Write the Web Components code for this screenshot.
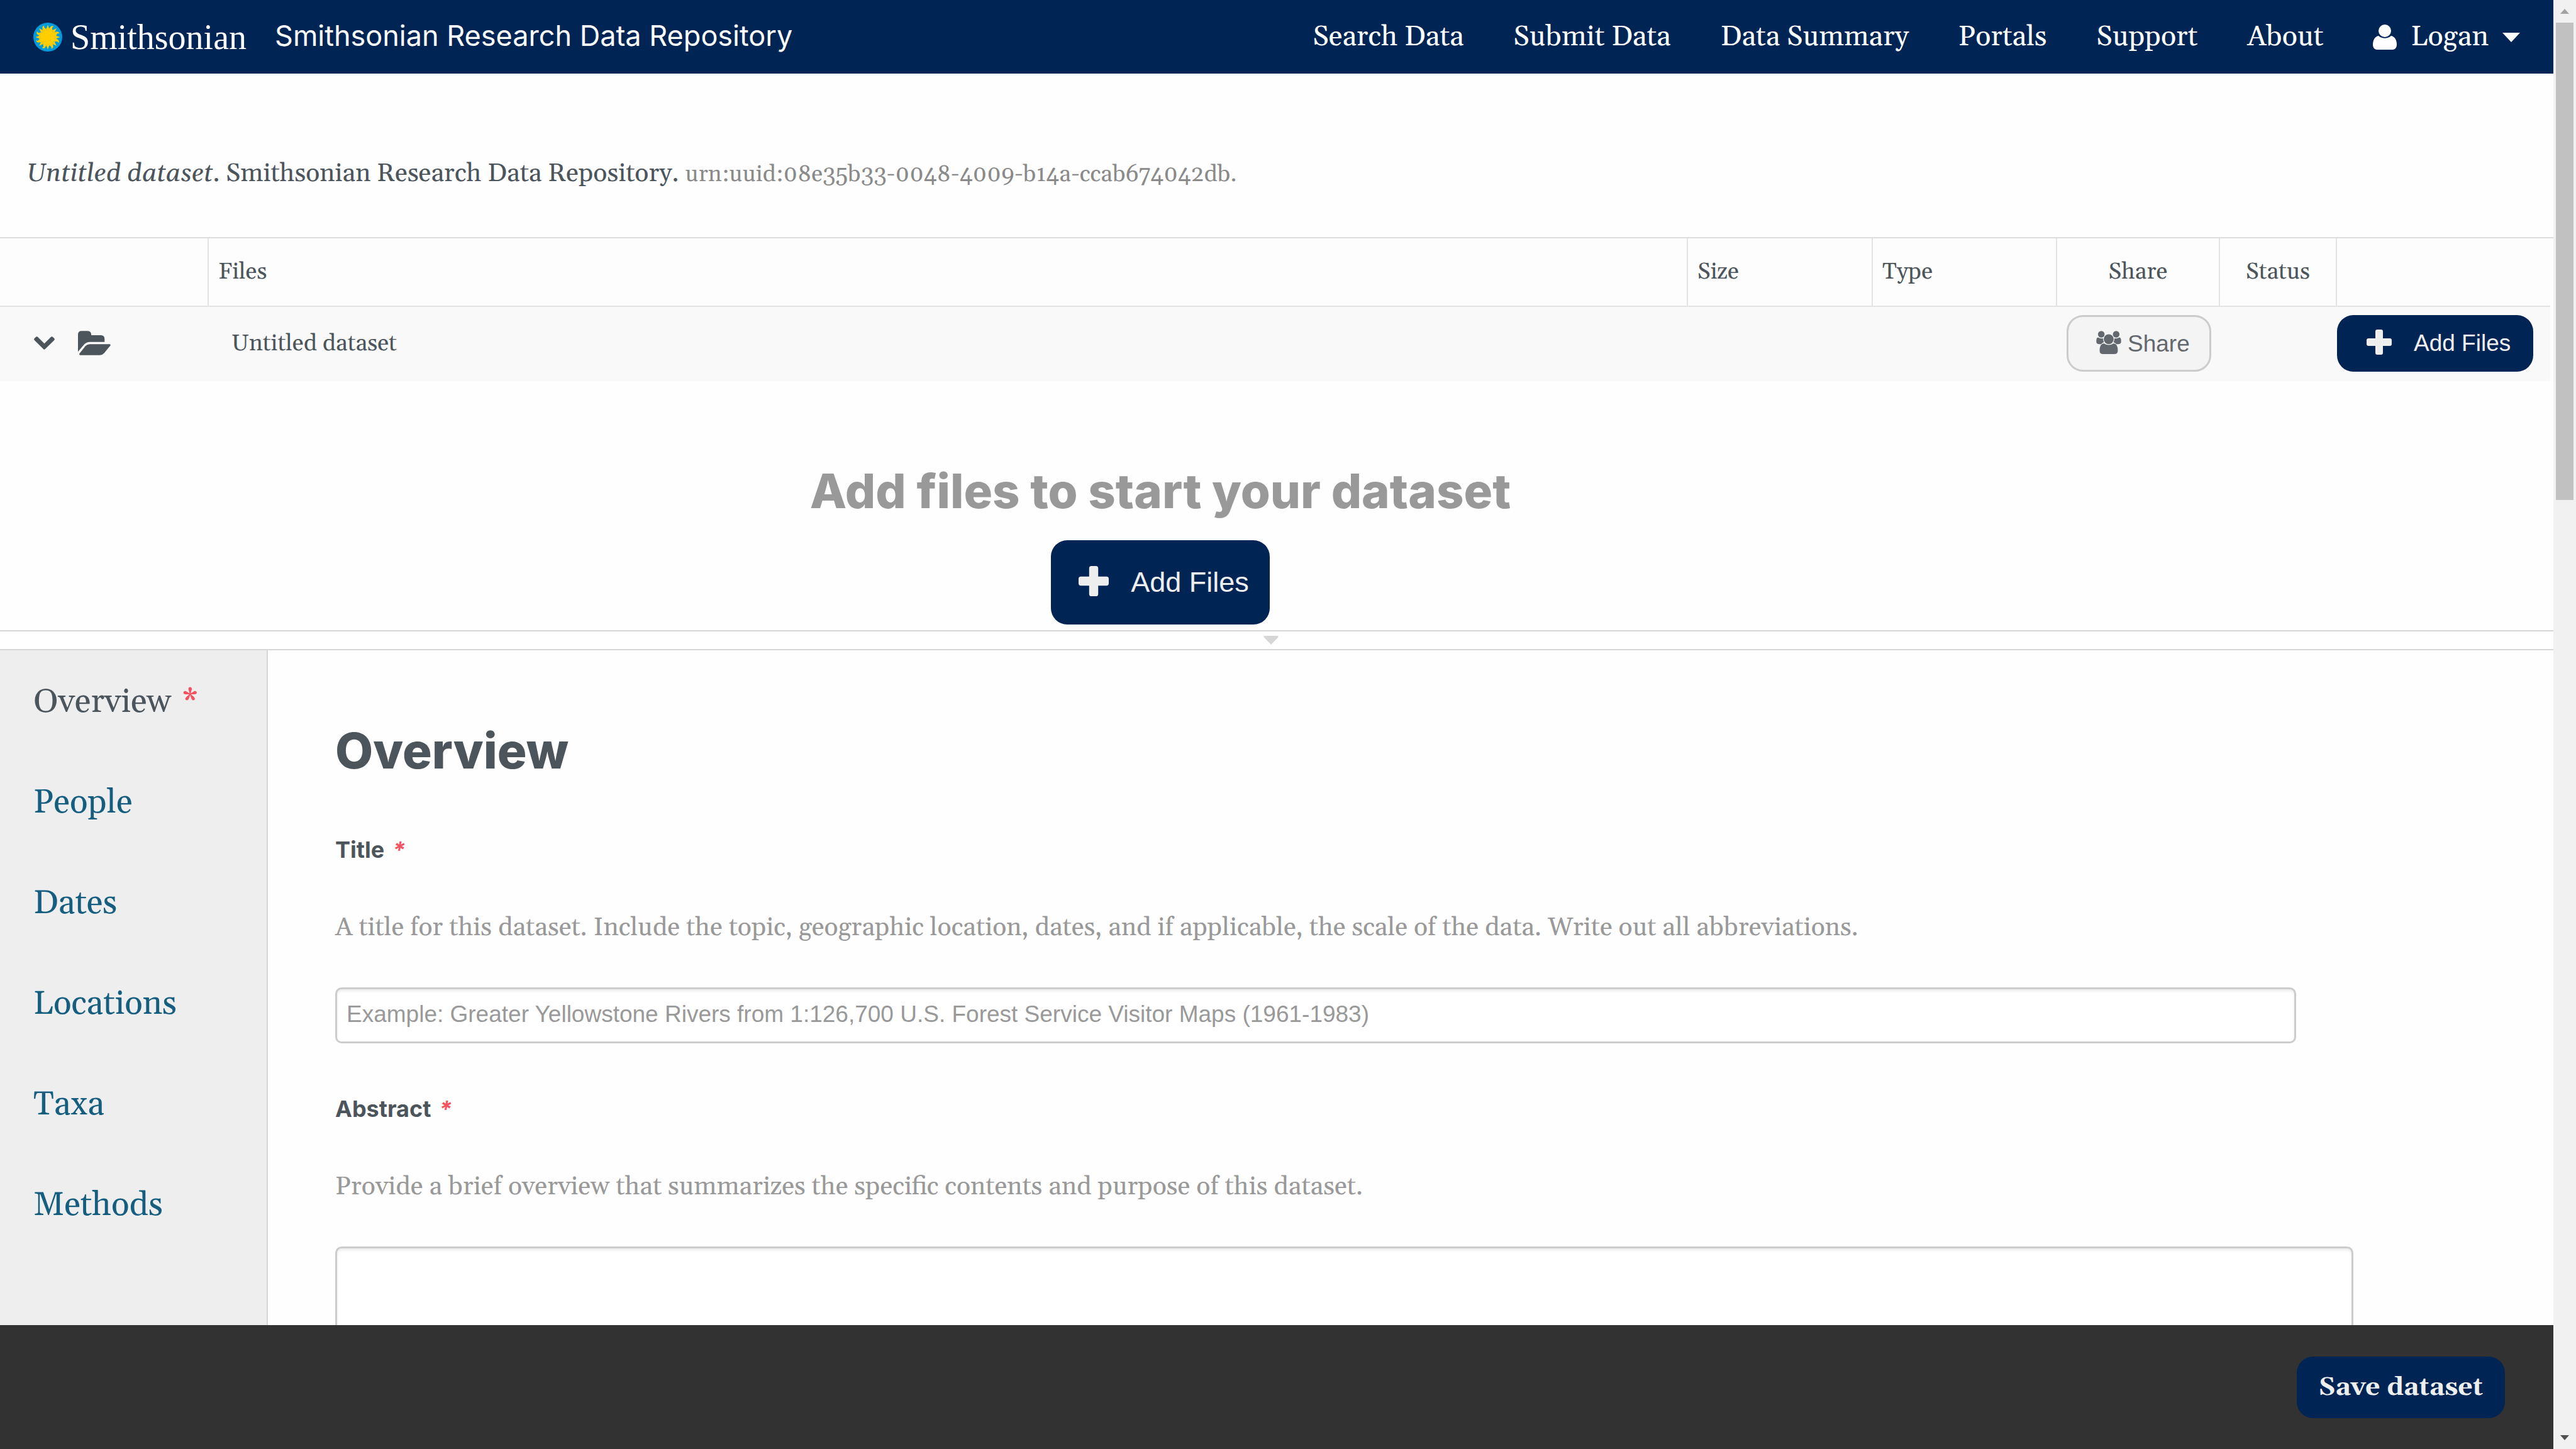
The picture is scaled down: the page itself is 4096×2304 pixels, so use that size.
<!DOCTYPE html>
<html lang="en">
<head>
<meta charset="utf-8">
<title>Smithsonian Research Data Repository</title>
<style>
  html, body { height: 100%; margin: 0; }
  body {
    --serif: Gelasio, Georgia, "Liberation Serif", serif;
    --sans: "Liberation Sans", Arial, sans-serif;
    --display: Inter, "Liberation Sans", sans-serif;
    --navy: #002554;
    --ink: #4c555c;
    --muted: #999;
    --required: #f5515f;
    --line: #d6d6d6;
    font-family: var(--serif);
    font-variant-numeric: oldstyle-nums;
    color: var(--ink);
    background: #fefefe;
    overflow: hidden;
  }
</style>
</head>
<body>
<data-editor-page></data-editor-page>

<script>
const define = (name, html, setup) => {
  const template = document.createElement('template');
  template.innerHTML = html;
  customElements.define(name, class extends HTMLElement {
    connectedCallback() {
      if (this.shadowRoot) return;
      this.attachShadow({ mode: 'open' }).append(template.content.cloneNode(true));
      if (setup) setup(this, this.shadowRoot);
    }
  });
};

/* Icons, chosen by the name attribute */
const straightRay = '<path d="M-7-26 Q-3-32 0-43 Q3-32 7-26Z"/>';
const wavyRay = '<path d="M-7-25 C-5-31-7-34-4-39 C-2-42 2-43 5-41 C1-39 1-36 3-33 C4-30 6-28 6-25Z"/>';
const ring = (ray, start) => Array.from({ length: 8 }, (_, i) => `<g transform="rotate(${start + i * 45})">${ray}</g>`).join('');
const icons = {
  sun: ['-50 -50 100 100', 46, 46, `<circle r="50" fill="#009ade"/><g fill="#ffcd00"><circle r="26"/>${ring(straightRay, 0)}${ring(wavyRay, 22.5)}</g>`],
  user: ['0 0 38 40', 38, 40, '<circle cx="19" cy="10" r="10"/><path d="M9 18C3 19 0 25 0 32c0 5 3 8 7 8h24c4 0 7-3 7-8 0-7-3-13-9-14-6 5-14 5-20 0z"/>'],
  caret: ['0 0 28 15', 28, 15, '<path d="M0 0H28L14 15Z"/>'],
  grip: ['0 0 24 14', 24, 14, '<path d="M2 0H22Q24 0 23.500 2L12 14 .5 2Q0 0 2 0Z"/>'],
  chevron: ['125 321 185 118', 33, 21, '<path d="M128 353Q123 346 128 339L142 325Q149 319 157 324L217.500 384 278 324Q286 319 293 325L307 339Q312 346 307 353L225 434Q217 442 209 434Z"/>'],
  folder: ['516 249 294 219', 52, 39, '<path d="M516 436V281Q516 249 548 249H604Q636 249 636 288H722Q755 288 755 322V348H622Q593 348 571 371Z"/><path d="M583 386Q600 368 626 368H800Q813 370 807 381L751 449Q735 467 712 468H538Q524 465 529 453Z"/>'],
  group: ['335 263 227 211', 40, 37, '<circle cx="381" cy="294" r="30"/><circle cx="516" cy="294" r="30"/><circle cx="448.500" cy="339" r="45"/><path d="M351 323Q372 337 397 331Q396 352 405 367Q390 371 380 384H360Q337 384 336 362Q335 323 351 323Z"/><path d="M546 323Q525 337 500 331Q501 352 492 367Q507 371 517 384H537Q560 384 561 362Q562 323 546 323Z"/><path d="M404 377Q449 407 493 377Q531 380 531 442Q531 474 498 474H398Q366 474 366 442Q366 380 404 377Z"/>'],
  plus: ['0 0 40 40', 40, 40, '<path d="M17 0H23Q26 0 26 3V14H37Q40 14 40 17V23Q40 26 37 26H26V37Q26 40 23 40H17Q14 40 14 37V26H3Q0 26 0 23V17Q0 14 3 14H14V3Q14 0 17 0Z"/>']
};
define('ui-icon', '<style>:host{display:block;flex:none}svg{display:block;fill:currentColor}</style>', (host, root) => {
  const [box, w, h, body] = icons[host.getAttribute('name')];
  const scale = Number(host.getAttribute('scale') || 1);
  root.innerHTML += `<svg viewBox="${box}" width="${Math.round(w * scale)}" height="${Math.round(h * scale)}" aria-hidden="true">${body}</svg>`;
});

/* Buttons: variants "plain", "large" and "save" change the default navy one */
define('ui-button', `
<style>
  :host { display: inline-block; vertical-align: middle; }
  button {
    box-sizing: border-box; display: flex; align-items: center; gap: 35px;
    height: 90px; margin: 0; padding: 0 36px 4px 47px; border: 0; border-radius: 26px;
    background: var(--navy); color: #eee; font: 37px/42px var(--sans); white-space: nowrap; cursor: pointer;
  }
  span { padding-top: 4px; }
  :host([variant=plain]) button {
    gap: 10px; padding: 0 31px 2px 44px; border: 3px solid #ccc; background: #f4f4f4; color: #63686e;
  }
  :host([variant=large]) button { height: 134px; padding: 0 33px 4px 44px; font-size: 45px; line-height: 52px; }
  :host([variant=save]) button { height: 98px; padding: 0 35px; font: 700 41px/48px var(--serif); }
  :host([variant=save]) span { padding: 0; }
</style>
<button type="button"><slot name="icon"></slot><span><slot></slot></span></button>`);

define('site-header', `
<style>
  :host { display: block; background: var(--navy); color: #fff; }
  header { display: flex; align-items: center; height: 117px; padding: 0 53px; }
  a { color: inherit; text-decoration: none; white-space: nowrap; }
  .logo { display: flex; align-items: center; gap: 13px; font: 56px/64px "Liberation Serif", serif; }
  .name { margin-left: 45px; padding-bottom: 3px; font: 45px/52px var(--display); }
  nav { display: flex; gap: 79px; margin-left: auto; padding-top: 1px; font-size: 45px; line-height: 52px; }
  button {
    display: flex; align-items: center; gap: 22px; padding: 0; border: 0;
    background: none; color: inherit; font: inherit; cursor: pointer;
  }
</style>
<header>
  <a class="logo" href="#home"><ui-icon name="sun"></ui-icon><span>Smithsonian</span></a>
  <a class="name" href="#home">Smithsonian Research Data Repository</a>
  <nav>
    <a href="#search">Search Data</a>
    <a href="#submit">Submit Data</a>
    <a href="#summary">Data Summary</a>
    <a href="#portals">Portals</a>
    <a href="#support">Support</a>
    <a href="#about">About</a>
    <button type="button" aria-haspopup="menu"><ui-icon name="user"></ui-icon><span>Logan</span><ui-icon name="caret"></ui-icon></button>
  </nav>
</header>`);

define('dataset-citation', `
<style>
  :host { display: block; padding: 135px 42px 75px; font-size: 41px; line-height: 48px; }
  p { margin: 0; }
  .id { font-size: 37px; color: #8a8a8a; }
</style>
<p><i>Untitled dataset</i>. Smithsonian Research Data Repository. <span class="id">urn:uuid:08e35b33-0048-4009-b14a-ccab674042db.</span></p>`);

define('file-table', `
<style>
  :host { display: block; border-top: 2px solid #ddd; background: #fdfdfd; }
  table { width: calc(100% - 5px); table-layout: fixed; border-spacing: 0; font-size: 37px; line-height: 44px; }
  .tools { width: 332px; } .size { width: 294px; } .type { width: 293px; }
  .share { width: 259px; } .status { width: 186px; } .actions { width: 339px; }
  th, td { box-sizing: border-box; padding: 0; text-align: left; font-weight: 400; }
  th { height: 109px; padding: 0 12px 0 15px; border-right: 2px solid #e3e3e3; border-bottom: 2px solid #e3e3e3; }
  th:last-child { border-right: 0; }
  .center { padding-left: 12px; text-align: center; }
  td { height: 118px; padding-bottom: 3px; background: #f9f9f9; }
  td.title { padding: 0 0 0 36px; }
  .pad { padding-left: 15px; }
  .toggle { display: flex; align-items: center; gap: 37px; padding-left: 54px; }
</style>
<table>
  <colgroup><col class="tools"><col><col class="size"><col class="type"><col class="share"><col class="status"><col class="actions"></colgroup>
  <thead><tr><th></th><th>Files</th><th>Size</th><th>Type</th><th class="center">Share</th><th class="center">Status</th><th></th></tr></thead>
  <tbody><tr>
    <td><div class="toggle"><ui-icon name="chevron"></ui-icon><ui-icon name="folder"></ui-icon></div></td>
    <td class="title">Untitled dataset</td><td></td><td></td>
    <td class="pad"><ui-button variant="plain"><ui-icon slot="icon" name="group"></ui-icon>Share</ui-button></td>
    <td></td>
    <td><ui-button><ui-icon slot="icon" name="plus"></ui-icon>Add Files</ui-button></td>
  </tr></tbody>
</table>`);

define('empty-files', `
<style>
  :host { display: block; padding: 129px 370px 9px 0; text-align: center; }
  h2 { margin: 0 0 34px; font: 800 76px/90px var(--display); color: var(--muted); }
  ui-button { display: flex; justify-content: center; }
</style>
<h2>Add files to start your dataset</h2>
<ui-button variant="large"><ui-icon slot="icon" name="plus" scale="1.2"></ui-icon>Add Files</ui-button>`);

define('pane-resizer', `
<style>
  :host {
    display: flex; box-sizing: border-box; height: 32px; align-items: center; justify-content: center; padding-right: 18px;
    border: solid var(--line); border-width: 2px 0; background: #fff; color: var(--line);
  }
</style>
<ui-icon name="grip"></ui-icon>`);

define('section-nav', `
<style>
  :host { display: block; box-sizing: border-box; width: 426px; flex: none; padding-top: 3px; background: #eee; border-right: 2px solid var(--line); }
  a { display: block; padding-left: 53px; font-size: 53px; line-height: 160px; color: #165e80; text-decoration: none; }
  .active { color: var(--ink); }
  .star { margin-left: 17px; color: var(--required); }
</style>
<nav>
  <a class="active" href="#overview">Overview<span class="star">*</span></a>
  <a href="#people">People</a>
  <a href="#dates">Dates</a>
  <a href="#locations">Locations</a>
  <a href="#taxa">Taxa</a>
  <a href="#methods">Methods</a>
</nav>`);

define('overview-form', `
<style>
  :host { display: block; flex: 1; min-width: 0; padding: 115px 318px 0 107px; }
  h1 { margin: 0 0 90px; font: 800 78px/90px var(--display); }
  label { display: block; font: 700 36px/44px var(--display); }
  label i { margin-left: 13px; color: var(--required); }
  p { margin: 74px 0 67px; font-size: 41px; line-height: 56px; color: var(--muted); }
  input, textarea {
    display: block; box-sizing: border-box; margin: 0; border: 3px solid #ccc; border-radius: 10px;
    background: #fff; box-shadow: inset 0 3px 4px #00000014; color: var(--ink); font: 37px/44px var(--sans);
  }
  input { width: calc(100% - 91px); height: 89px; margin-bottom: 82px; padding: 0 15px 4px; }
  textarea { width: 100%; height: 400px; padding: 15px; resize: none; }
  ::placeholder { color: var(--muted); opacity: 1; }
</style>
<form>
  <h1>Overview</h1>
  <label for="title">Title<i>*</i></label>
  <p>A title for this dataset. Include the topic, geographic location, dates, and if applicable, the scale of the data. Write out all abbreviations.</p>
  <input id="title" type="text" placeholder="Example: Greater Yellowstone Rivers from 1:126,700 U.S. Forest Service Visitor Maps (1961-1983)">
  <label for="abstract">Abstract<i>*</i></label>
  <p>Provide a brief overview that summarizes the specific contents and purpose of this dataset.</p>
  <textarea id="abstract"></textarea>
</form>`);

define('save-bar', `
<style>
  :host { display: flex; flex: none; align-items: center; justify-content: flex-end; height: 197px; padding-right: 77px; background: #323232; }
</style>
<ui-button variant="save">Save dataset</ui-button>`);

define('page-scrollbar', `
<style>
  :host { display: flex; flex-direction: column; flex: none; width: 36px; background: #f1f1f1; }
  .arrow { display: flex; align-items: center; justify-content: center; height: 36px; }
  .track { flex: 1; padding: 0 4px; }
  .thumb { height: 34%; background: #c1c1c1; }
</style>
<div class="arrow"><svg width="14" height="8"><path d="M0 8L7 0L14 8Z" fill="#a3a3a3"/></svg></div>
<div class="track"><div class="thumb"></div></div>
<div class="arrow"><svg width="14" height="8"><path d="M0 0H14L7 8Z" fill="#505050"/></svg></div>`);

define('data-editor-page', `
<style>
  :host { display: flex; height: 100%; }
  .page { display: flex; flex: 1; min-width: 0; flex-direction: column; }
  .content { display: flex; flex: 1; min-height: 0; flex-direction: column; overflow: hidden; }
  .editor { display: flex; flex: 1; min-height: 0; }
</style>
<div class="page">
  <site-header></site-header>
  <main class="content">
    <dataset-citation></dataset-citation>
    <file-table></file-table>
    <empty-files></empty-files>
    <pane-resizer></pane-resizer>
    <div class="editor"><section-nav></section-nav><overview-form></overview-form></div>
  </main>
  <save-bar></save-bar>
</div>
<page-scrollbar aria-hidden="true"></page-scrollbar>`);
</script>
</body>
</html>
